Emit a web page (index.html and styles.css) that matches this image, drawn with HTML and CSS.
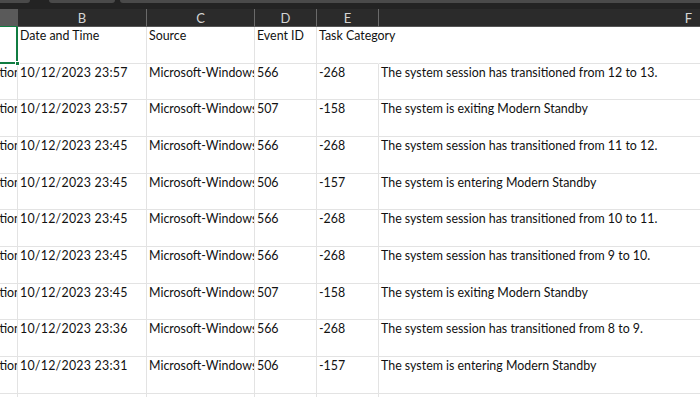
FILE: index.html
```html
<!DOCTYPE html>
<html lang="en">
<head>
  <meta charset="UTF-8">
  <title>Event log export</title>
  <link rel="stylesheet" href="styles.css">
</head>
<body>
  <div class="window">
    <!-- Ribbon tabs peeking in at the top -->
    <div class="tabs">
      <span class="tab tab-1"></span>
      <span class="tab tab-2"></span>
      <span class="tab tab-3"></span>
    </div>

    <div class="sheet">
      <!-- Column letters -->
      <div class="grid col-heads">
        <div class="col-head active"></div>
        <div class="col-head">B</div>
        <div class="col-head">C</div>
        <div class="col-head">D</div>
        <div class="col-head">E</div>
        <div class="col-head">F</div>
      </div>

      <!-- Cells -->
      <div class="grid cells">
        <div class="cell clip-left selected"></div>
        <div class="cell">Date and Time</div>
        <div class="cell">Source</div>
        <div class="cell">Event ID</div>
        <div class="cell spill">Task Category</div>
        <div class="cell"></div>

        <div class="cell clip-left"><span>Information</span></div>
        <div class="cell date">10/12/2023 23:57</div>
        <div class="cell">Microsoft-Windows-Kernel-Power</div>
        <div class="cell">566</div>
        <div class="cell">-268</div>
        <div class="cell">The system session has transitioned from 12 to 13.</div>

        <div class="cell clip-left"><span>Information</span></div>
        <div class="cell date">10/12/2023 23:57</div>
        <div class="cell">Microsoft-Windows-Kernel-Power</div>
        <div class="cell">507</div>
        <div class="cell">-158</div>
        <div class="cell">The system is exiting Modern Standby</div>

        <div class="cell clip-left"><span>Information</span></div>
        <div class="cell date">10/12/2023 23:45</div>
        <div class="cell">Microsoft-Windows-Kernel-Power</div>
        <div class="cell">566</div>
        <div class="cell">-268</div>
        <div class="cell">The system session has transitioned from 11 to 12.</div>

        <div class="cell clip-left"><span>Information</span></div>
        <div class="cell date">10/12/2023 23:45</div>
        <div class="cell">Microsoft-Windows-Kernel-Power</div>
        <div class="cell">506</div>
        <div class="cell">-157</div>
        <div class="cell">The system is entering Modern Standby</div>

        <div class="cell clip-left"><span>Information</span></div>
        <div class="cell date">10/12/2023 23:45</div>
        <div class="cell">Microsoft-Windows-Kernel-Power</div>
        <div class="cell">566</div>
        <div class="cell">-268</div>
        <div class="cell">The system session has transitioned from 10 to 11.</div>

        <div class="cell clip-left"><span>Information</span></div>
        <div class="cell date">10/12/2023 23:45</div>
        <div class="cell">Microsoft-Windows-Kernel-Power</div>
        <div class="cell">566</div>
        <div class="cell">-268</div>
        <div class="cell">The system session has transitioned from 9 to 10.</div>

        <div class="cell clip-left"><span>Information</span></div>
        <div class="cell date">10/12/2023 23:45</div>
        <div class="cell">Microsoft-Windows-Kernel-Power</div>
        <div class="cell">507</div>
        <div class="cell">-158</div>
        <div class="cell">The system is exiting Modern Standby</div>

        <div class="cell clip-left"><span>Information</span></div>
        <div class="cell date">10/12/2023 23:36</div>
        <div class="cell">Microsoft-Windows-Kernel-Power</div>
        <div class="cell">566</div>
        <div class="cell">-268</div>
        <div class="cell">The system session has transitioned from 8 to 9.</div>

        <div class="cell clip-left"><span>Information</span></div>
        <div class="cell date">10/12/2023 23:31</div>
        <div class="cell">Microsoft-Windows-Kernel-Power</div>
        <div class="cell">506</div>
        <div class="cell">-157</div>
        <div class="cell">The system is entering Modern Standby</div>

        <div class="cell"></div>
        <div class="cell"></div>
        <div class="cell"></div>
        <div class="cell"></div>
        <div class="cell"></div>
        <div class="cell"></div>
      </div>
    </div>
  </div>
</body>
</html>
```

FILE: styles.css
```css
/* Spreadsheet (dark chrome, light grid) */
:root {
  --chrome: #2b2b2b;
  --chrome-dark: #232323;
  --tab: #4a4a4a;
  --head-text: #d4d4d4;
  --head-line: #6a6a6a;
  --grid-line: #e3e3e3;
  --selected: #107c41;
  --text: #111;
}

html, body {
  margin: 0;
  padding: 0;
  overflow: hidden;
  background: #fff;
}

body {
  font-family: Lato, "Open Sans", sans-serif;
  color: var(--text);
}

.window {
  width: 700px;
  height: 397px;
  overflow: hidden;
}

.tabs {
  display: flex;
  height: 9px;
  background: var(--chrome-dark);
}

.tab {
  height: 3px;
  background: var(--tab);
}

.tab-1 {width: 30px; border-bottom-right-radius: 3px;}
.tab-2 {width: 66px; margin-left: 19px; border-bottom-left-radius: 3px; border-bottom-right-radius: 3px;}
.tab-3 {flex: 1; margin-left: 5px; border-bottom-left-radius: 3px;}

.grid {
  display: grid;
  grid-template-columns: 18px 129px 108px 62px 62px 620px;
  width: 999px;
}

.col-heads {
  background: var(--chrome);
  height: 18px;
}

.col-head {
  box-sizing: border-box;
  height: 18px;
  padding-top: 1px;
  border-right: 1px solid var(--head-line);
  border-bottom: 1px solid #555;
  color: var(--head-text);
  font-size: 13px;
  line-height: 16px;
  text-align: center;
}

.col-head.active {
  background: #5a5a5a;
  border-right-color: #5a5a5a;
  border-bottom: 1px solid var(--selected);
}

.cells {
  grid-auto-rows: 36.67px;
  background: #fff;
}

.cell {
  box-sizing: border-box;
  padding: 1px 0 0 2px;
  border-right: 1px solid var(--grid-line);
  border-bottom: 1px solid var(--grid-line);
  font-size: 12.4px;
  line-height: 16px;
  white-space: nowrap;
  overflow: hidden;
}

.cell.date {
  letter-spacing: 0.25px;
}

.cell.spill {
  overflow: visible;
  border-right-color: transparent;
}

.clip-left {
  display: flex;
  justify-content: flex-end;
  padding-left: 0;
}

.clip-left span {
  margin-right: -4px;
}

.selected {
  position: relative;
  overflow: visible;
  border-right: 2px solid var(--selected);
  border-bottom: 2px solid var(--selected);
}

.selected::after {
  content: "";
  position: absolute;
  right: -4px;
  bottom: -4px;
  width: 5px;
  height: 5px;
  background: var(--selected);
  border: 1px solid #fff;
  box-sizing: border-box;
}
```
